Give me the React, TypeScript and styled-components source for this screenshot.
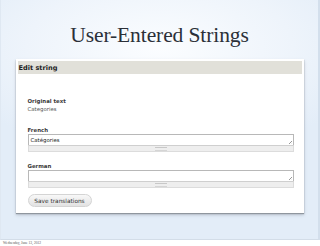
import styled, { createGlobalStyle } from 'styled-components';

const Global = createGlobalStyle`
  html, body { margin: 0; padding: 0; background: #ffffff; }
  body { width: 320px; height: 246px; overflow: hidden; }
`

const Slide = styled.div`
  box-sizing: border-box;
  width: 320px;
  height: 240px;
  padding-top: 23px;
  border-left: 1px solid #dfe8f2;
  border-right: 2px solid #d3dfec;
  border-bottom: 1px solid #d3dde8;
  background: radial-gradient(ellipse 70% 45% at 50% 20%, #fbfdff 0%, #eef4fb 60%, #e3edf8 100%);
  display: flex;
  flex-direction: column;
  align-items: center;
`

const Title = styled.h1`
  margin: 0;
  font-family: "Liberation Serif", "Times New Roman", serif;
  font-weight: normal;
  font-size: 21.5px;
  line-height: 24px;
  color: #2b3038;
  letter-spacing: -0.1px;
`

const Panel = styled.div`
  box-sizing: border-box;
  margin-top: 12px;
  width: 288px;
  height: 154px;
  background: #ffffff;
  padding: 2px 2px 0 2px;
  box-shadow: 0 1px 1px #8f969e, 0 2px 3px rgba(120, 130, 140, 0.4);
  font-family: "DejaVu Sans", "Liberation Sans", sans-serif;
`

const Header = styled.div`
  height: 13px;
  background: #e1e0d9;
  padding-left: 1px;
  display: flex;
  align-items: center;
  font-size: 6.6px;
  font-weight: bold;
  color: #222;
`

const Body = styled.div`
  padding: 24px 8px 0 10px;
  display: flex;
  flex-direction: column;
`

const Field = styled.div<{ $gap: number }>`
  display: flex;
  flex-direction: column;
  margin-bottom: ${p => p.$gap}px;
`

const Label = styled.div`
  font-size: 5.4px;
  font-weight: bold;
  color: #3a3a3a;
  line-height: 7px;
`

const Value = styled.div`
  font-size: 5.4px;
  color: #555;
  line-height: 9px;
`

const TextBox = styled.div`
  position: relative;
  box-sizing: border-box;
  height: 11px;
  border: 1px solid #b8b8b8;
  border-bottom: none;
  padding: 1px 2px;
  font-size: 5.4px;
  color: #222;
  line-height: 8px;
`

const Corner = styled.span`
  position: absolute;
  right: 1px;
  bottom: 1px;
  width: 3px;
  height: 3px;
  background: linear-gradient(135deg, transparent 45%, #999 50%, transparent 60%, transparent 70%, #999 75%, transparent 85%);
`

const Grip = styled.div`
  height: 5px;
  border: 1px solid #dcdcdc;
  border-top: 1px solid #cfcfcf;
  background: #eeeeee;
  display: flex;
  justify-content: center;
  align-items: center;
`

const GripLines = styled.span`
  width: 12px;
  height: 2px;
  border-top: 1px solid #c8c8c8;
  border-bottom: 1px solid #d5d5d5;
`

const Button = styled.button`
  align-self: flex-start;
  box-sizing: border-box;
  height: 13px;
  width: 64px;
  padding: 0;
  border: 1px solid #d4d4d4;
  border-radius: 7px;
  background: linear-gradient(#f8f8f8, #e2e2e2);
  font-family: "DejaVu Sans", "Liberation Sans", sans-serif;
  font-size: 5.8px;
  color: #333;
`

const Footer = styled.div`
  padding: 0 0 0 3px;
  font-family: "Liberation Serif", serif;
  font-size: 3.6px;
  line-height: 6px;
  color: #555;
`

function Translation({ label, value, gap }: { label: string; value: string; gap: number }) {
  return (
    <Field $gap={gap}>
      <Label>{label}</Label>
      <TextBox>{value}<Corner /></TextBox>
      <Grip><GripLines /></Grip>
    </Field>
  )
}

export default function App() {
  return (
    <>
      <Global />
      <Slide>
        <Title>User-Entered Strings</Title>
        <Panel>
          <Header>Edit string</Header>
          <Body>
            <Field $gap={13}>
              <Label>Original text</Label>
              <Value>Categories</Value>
            </Field>
            <Translation label="French" value="Catégories" gap={11} />
            <Translation label="German" value="" gap={6} />
            <Button>Save translations</Button>
          </Body>
        </Panel>
      </Slide>
      <Footer>Wednesday, June 13, 2012</Footer>
    </>
  )
}
